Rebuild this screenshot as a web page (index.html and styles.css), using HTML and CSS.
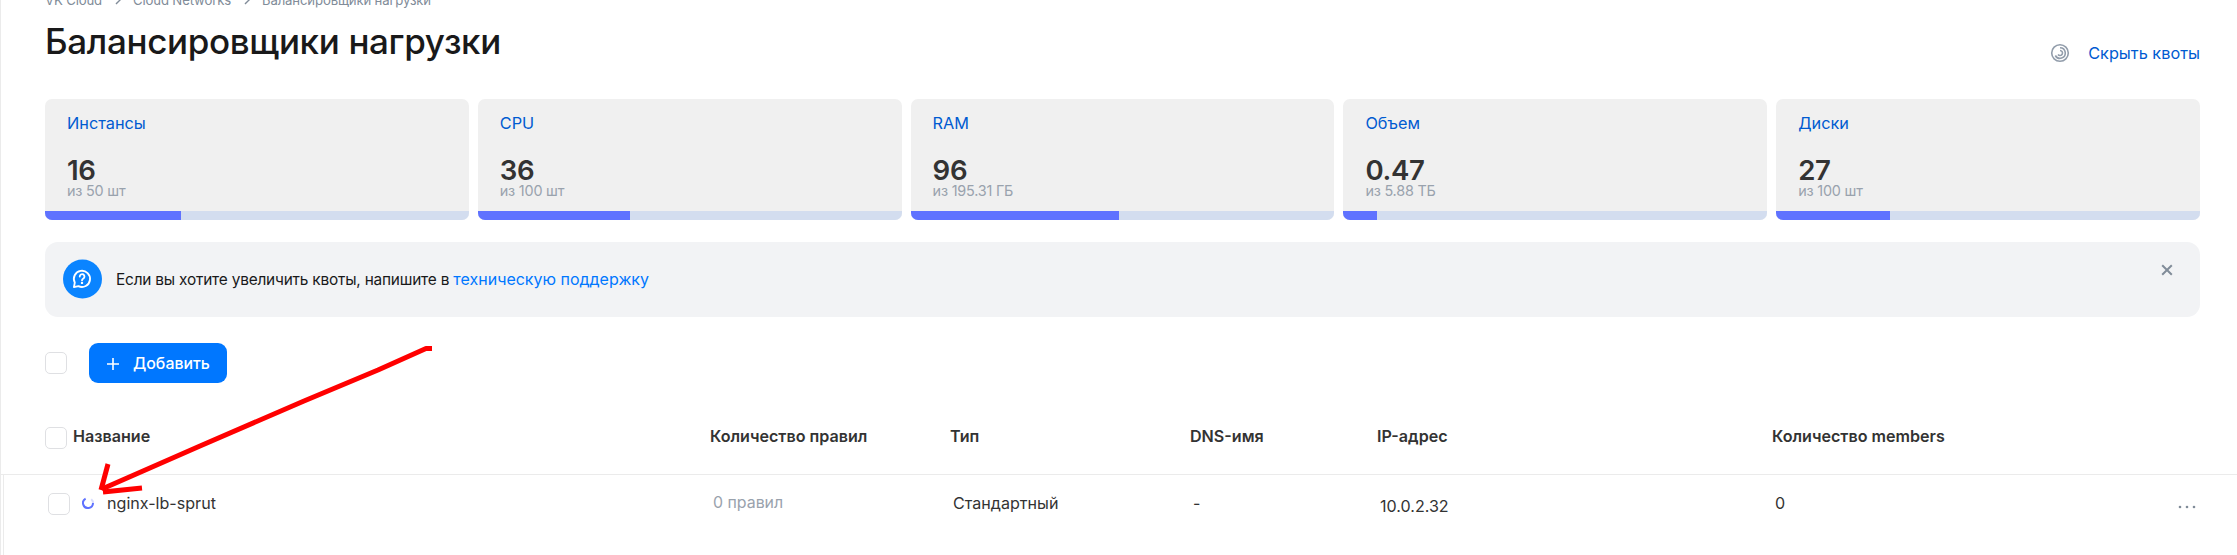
FILE: index.html
```html
<!DOCTYPE html>
<html lang="ru">
<head>
<meta charset="utf-8">
<title>Балансировщики нагрузки</title>
<link rel="stylesheet" href="styles.css">
</head>
<body>
<div class="page">
  <nav class="crumbs">
    <span>VK Cloud</span>
    <svg class="chev" viewBox="0 0 8 10"><path d="M2 1l4 4-4 4"/></svg>
    <span>Cloud Networks</span>
    <svg class="chev" viewBox="0 0 8 10"><path d="M2 1l4 4-4 4"/></svg>
    <span>Балансировщики нагрузки</span>
  </nav>
  <header class="head">
    <h1 class="title">Балансировщики нагрузки</h1>
    <div class="quota-toggle">
      <svg class="quota-icon" viewBox="0 0 20 20"><circle cx="10" cy="10" r="8.3"/><path d="M10 4.7a5.3 5.3 0 1 1-4.7 7.8"/><path d="M10 7.5a2.5 2.5 0 1 1-2 4"/></svg>
      <a class="link">Скрыть квоты</a>
    </div>
  </header>
  <section class="cards">
    <article class="card"><a class="card-name link">Инстансы</a><b class="card-value">16</b><span class="card-limit">из 50 шт</span><div class="bar"><i class="fill" style="width:32%"></i></div></article>
    <article class="card"><a class="card-name link">CPU</a><b class="card-value">36</b><span class="card-limit">из 100 шт</span><div class="bar"><i class="fill" style="width:36%"></i></div></article>
    <article class="card"><a class="card-name link">RAM</a><b class="card-value">96</b><span class="card-limit">из 195.31 ГБ</span><div class="bar"><i class="fill" style="width:49.15%"></i></div></article>
    <article class="card"><a class="card-name link">Объем</a><b class="card-value">0.47</b><span class="card-limit">из 5.88 ТБ</span><div class="bar"><i class="fill" style="width:8%"></i></div></article>
    <article class="card"><a class="card-name link">Диски</a><b class="card-value">27</b><span class="card-limit">из 100 шт</span><div class="bar"><i class="fill" style="width:26.9%"></i></div></article>
  </section>
  <section class="banner">
    <svg class="banner-icon" viewBox="0 0 40 40"><circle class="disc" cx="20" cy="20" r="20"/><path d="M11.2 28.3l.9-4.6a8.3 8.3 0 1 1 3.7 3.6z"/><path d="M17.2 17.4a2.4 2.4 0 1 1 3.7 2c-.9.6-1.4 1-1.4 1.9"/><circle class="dot" cx="19.5" cy="24" r="1.2"/></svg>
    <p class="banner-text">Если вы хотите увеличить квоты, напишите в <a class="bright">техническую поддержку</a></p>
    <svg class="close" viewBox="0 0 12 12"><path d="M1.2 1.2l9.6 9.6M10.8 1.2l-9.6 9.6"/></svg>
  </section>
  <div class="toolbar">
    <span class="check"></span>
    <button class="add"><svg class="plus" viewBox="0 0 12 12"><path d="M6 0v12M0 6h12"/></svg>Добавить</button>
  </div>
  <div class="thead cols">
    <div class="cell first"><span class="check"></span>Название</div>
    <div class="cell">Количество правил</div><div class="cell">Тип</div><div class="cell">DNS-имя</div><div class="cell">IP-адрес</div><div class="cell">Количество members</div>
  </div>
  <div class="trow cols">
    <div class="cell first"><span class="check"></span><svg class="spin" viewBox="0 0 12 12"><path d="M3.6 1.6A5 5 0 1 0 11 6"/><path class="tail" d="M11 6A5 5 0 0 0 9.2 2.2"/></svg>nginx-lb-sprut</div>
    <div class="cell muted">0 правил</div><div class="cell">Стандартный</div><div class="cell">-</div><div class="cell ip">10.0.2.32</div><div class="cell">0</div>
    <svg class="more" viewBox="0 0 20 4"><circle cx="3" cy="2" r="1.3"/><circle cx="10" cy="2" r="1.3"/><circle cx="17" cy="2" r="1.3"/></svg>
  </div>
  <svg class="arrow" viewBox="0 0 340 150"><path d="M338 8.500h-6L284 30 210 61 106 106 8 149"/><path d="M14 124L7 150"/><path d="M48 148L9 152"/></svg>
</div>
</body>
</html>
```
FILE: styles.css
```css
* { box-sizing: border-box; }
body { margin: 0; background: #fff; font-family: Inter, "Noto Sans", sans-serif; font-size: 16.1px; line-height: 22px; color: #333; }
.page { position: relative; width: 2237px; height: 555px; overflow: hidden; border-left: 1px solid #ebebeb; }
.crumbs { height: 20px; margin: -10px 0 0 44px; display: flex; align-items: center; gap: 11.5px; font-size: 13.2px; letter-spacing: -0.16px; color: #818c99; }
.chev { width: 8px; height: 10px; fill: none; stroke: #818c99; stroke-width: 1.4; }
.head { display: flex; justify-content: space-between; height: 89px; padding: 10px 37px 0 44px; }
.title { margin: 0; font-size: 35px; font-weight: 500; line-height: 42px; letter-spacing: -0.35px; color: #19191a; }
.quota-toggle { display: flex; align-items: center; gap: 18px; height: 22px; margin-top: 22px; }
.quota-icon { width: 20px; height: 20px; fill: none; stroke: #929dab; stroke-width: 1.6; }
.link { font-size: 16.3px; color: #005bd1; }
.cards { display: grid; grid-template-columns: repeat(5, 1fr); gap: 9px; margin: 0 37px 0 44px; }
.card { display: flex; flex-direction: column; height: 121px; padding: 13px 0 0 22px; background: #f0f0f0; border-radius: 7px; overflow: hidden; }
.card-value { margin-top: 22px; font-size: 27.6px; line-height: 28px; font-weight: 600; letter-spacing: -0.3px; }
.card-limit { font-size: 14.4px; line-height: 14px; letter-spacing: -0.2px; color: #99a2ad; }
.bar { height: 9px; margin: auto 0 0 -22px; background: #d3ddef; }
.fill { display: block; height: 9px; background: #5f72ff; }
.banner { display: flex; align-items: flex-start; height: 75px; margin: 22px 37px 0 44px; padding: 17px 27px 0 18px; background: #f2f3f5; border-radius: 13px; }
.banner-icon { width: 39px; height: 40px; fill: none; stroke: #fff; stroke-width: 1.9; stroke-linecap: round; stroke-linejoin: round; }
.disc { fill: #0a84ff; stroke: none; }
.dot { fill: #fff; stroke: none; }
.banner-text { margin: 9px auto 0 14px; font-size: 15.4px; letter-spacing: -0.2px; color: #19191a; }
.bright { font-size: 16px; letter-spacing: 0; color: #0077ff; }
.close { width: 12px; height: 12px; margin-top: 5px; fill: none; stroke: #818c99; stroke-width: 2; }
.toolbar { display: flex; align-items: center; gap: 22px; height: 40px; margin: 26px 0 0 44px; }
.check { flex: none; width: 22px; height: 22px; border: 1px solid #dfe0e3; border-radius: 5px; background: #fff; }
.add { display: flex; align-items: center; gap: 14px; width: 138px; height: 40px; padding: 1px 0 0 18px; border: 0; border-radius: 9px; background: #0077ff; color: #fff; font: 500 15.9px/22px Inter, "Noto Sans", sans-serif; }
.plus { width: 12px; height: 12px; stroke: #fff; stroke-width: 1.6; }
.cols { display: grid; grid-template-columns: 665px 240px 240px 187px 395px 1fr; }
.first { display: flex; align-items: flex-start; }
.thead { height: 92px; padding: 42px 37px 0 44px; font-size: 16.1px; font-weight: 600; border-bottom: 1px solid #ebebeb; }
.thead .check { margin: 2px 6px 0 0; }
.trow { position: relative; height: 84px; margin-left: 2px; padding: 17px 37px 0 44px; border-left: 1px solid #ebebeb; }
.trow .check { margin: 1px 12px 0 0; }
.spin { width: 12px; height: 12px; margin: 5px 13px 0 0; fill: none; stroke: #5f72ff; stroke-width: 2; }
.tail { opacity: .25; }
.muted { font-size: 15.9px; color: #99a2ad; }
.ip { padding-top: 3px; }
.more { position: absolute; right: 40px; top: 30px; width: 20px; height: 4px; fill: #818c99; }
.arrow { position: absolute; left: 93px; top: 340px; width: 340px; height: 150px; overflow: visible; fill: none; stroke: #f00; stroke-width: 5; stroke-linejoin: round; }
```
